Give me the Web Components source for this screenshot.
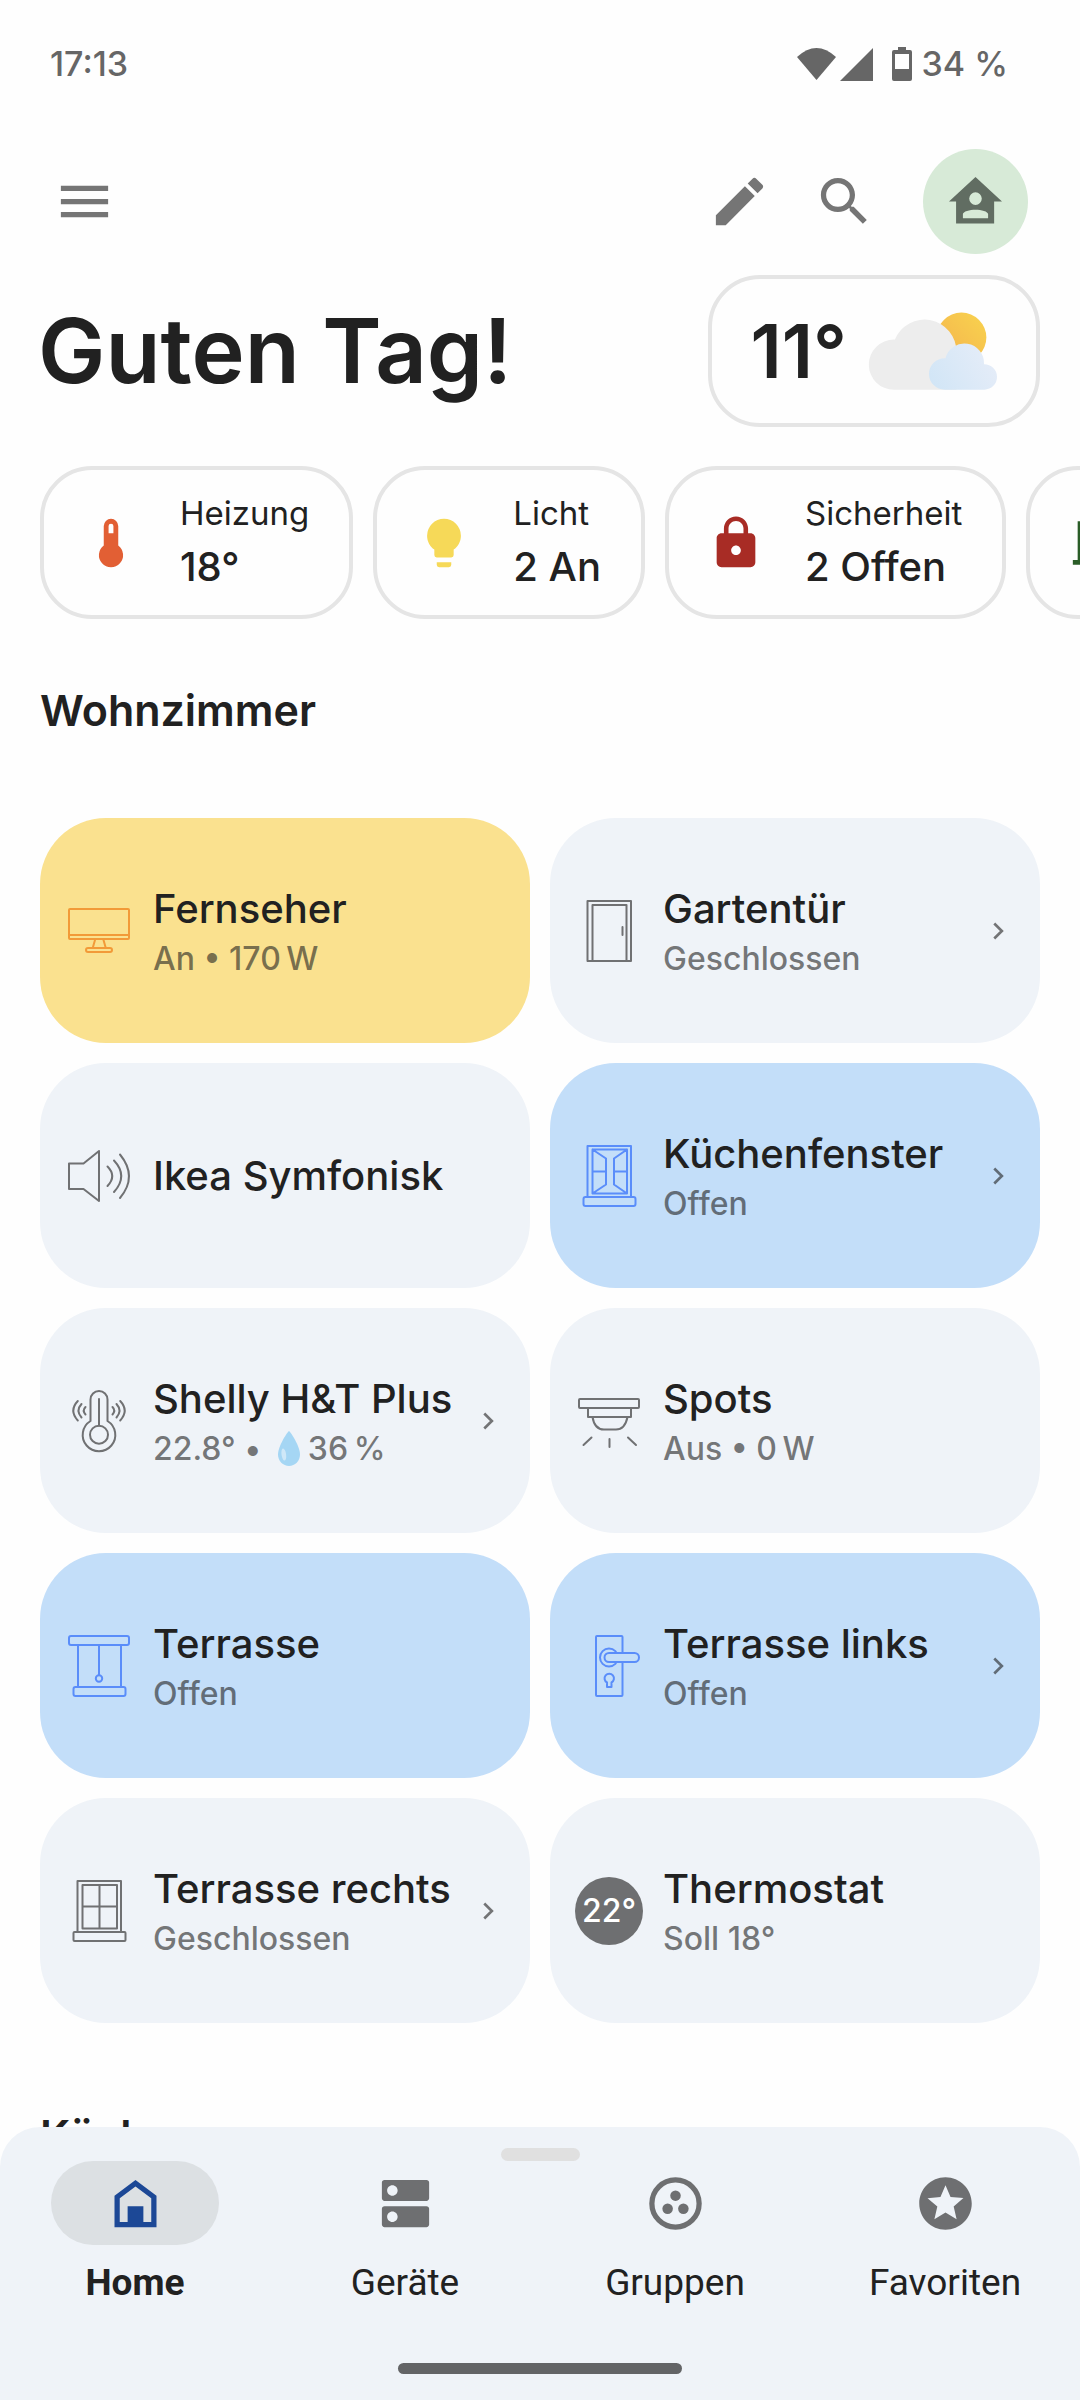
<!DOCTYPE html>
<html lang="de">
<head>
<meta charset="utf-8">
<meta name="viewport" content="width=device-width, initial-scale=1">
<title>Home</title>
<style>
  html, body { height: 100%; margin: 0; background: #fefefe; }
  body { font-family: Inter, "Open Sans", sans-serif; color: #212121; }
</style>
</head>
<body>
<home-app></home-app>

<script>
const ICONS = {
  menu: ['0 0 24 24', '<path d="M3 18h18v-2H3v2zm0-5h18v-2H3v2zm0-7v2h18V6H3z"/>'],
  edit: ['0 0 24 24', '<path d="M3 17.25V21h3.75L17.81 9.94l-3.75-3.75L3 17.25zM20.71 7.04c.39-.39.39-1.02 0-1.41l-2.34-2.34c-.39-.39-1.02-.39-1.41 0l-1.83 1.83 3.75 3.75 1.83-1.83z"/>'],
  search: ['0 0 24 24', '<path d="M15.5 14h-.79l-.28-.27C15.41 12.59 16 11.11 16 9.5 16 5.91 13.09 3 9.5 3S3 5.91 3 9.5 5.91 16 9.5 16c1.61 0 3.09-.59 4.23-1.57l.27.28v.79l5 4.99L20.49 19l-4.99-5zm-6 0C7.01 14 5 11.99 5 9.5S7.01 5 9.5 5 14 7.01 14 9.5 11.99 14 9.5 14z"/>'],
  account: ['0 0 24 24', '<path fill-rule="evenodd" d="M12 2.7 1.9 12h2.7v8.4h14.5V12h3zM12 8.5a2.4 2.4 0 1 1 0 4.8 2.4 2.4 0 0 1 0-4.8zM7.2 18.4v-1.5c0-1.2 2.6-1.8 4.8-1.8s4.8.6 4.8 1.8v1.5z"/>'],
  home: ['0 0 24 24', '<path fill-rule="evenodd" d="M12 3 4 9v12h16V9zM6 10l6-4.5 6 4.5v9h-3v-6H9v6H6z"/>'],
  devices: ['0 0 24 24', '<path fill-rule="evenodd" d="M20 13H4c-.55 0-1 .45-1 1v6c0 .55.45 1 1 1h16c.55 0 1-.45 1-1v-6c0-.55-.45-1-1-1zM7 19c-1.1 0-2-.9-2-2s.9-2 2-2 2 .9 2 2-.9 2-2 2zM20 3H4c-.55 0-1 .45-1 1v6c0 .55.45 1 1 1h16c.55 0 1-.45 1-1V4c0-.55-.45-1-1-1zM7 9c-1.1 0-2-.9-2-2s.9-2 2-2 2 .9 2 2-.9 2-2 2z"/>'],
  groups: ['0 0 24 24', '<circle cx="12" cy="12" r="9" fill="none" stroke="currentColor" stroke-width="2"/><circle cx="12" cy="9" r="2"/><circle cx="9" cy="14" r="2"/><circle cx="15" cy="14" r="2"/>'],
  star: ['0 0 24 24', '<path d="M11.99 2C6.47 2 2 6.48 2 12s4.47 10 9.99 10C17.52 22 22 17.52 22 12S17.52 2 11.99 2zm4.24 16L12 15.45 7.77 18l1.12-4.81-3.73-3.23 4.92-.42L12 5l1.92 4.53 4.92.42-3.73 3.23L16.23 18z"/>'],
  chevron: ['0 0 24 24', '<path d="M9.2 6.4 14.9 12l-5.7 5.6" fill="none" stroke="currentColor" stroke-width="2"/>'],
  heating: ['0 0 24 24', '<path fill-rule="evenodd" d="M15 13V5a3 3 0 0 0-6 0v8a5 5 0 1 0 6 0M12 4a1 1 0 0 1 1 1v3h-2V5a1 1 0 0 1 1-1z"/>'],
  bulb: ['0 0 24 24', '<path d="M12 2a7 7 0 0 0-7 7c0 2.38 1.19 4.47 3 5.74V17a1 1 0 0 0 1 1h6a1 1 0 0 0 1-1v-2.26c1.81-1.27 3-3.36 3-5.74a7 7 0 0 0-7-7M9 21a1 1 0 0 0 1 1h4a1 1 0 0 0 1-1v-1H9z"/>'],
  lock: ['0 0 24 24', '<path fill-rule="evenodd" d="M18 8h-1V6c0-2.76-2.24-5-5-5S7 3.24 7 6v2H6c-1.1 0-2 .9-2 2v10c0 1.1.9 2 2 2h12c1.1 0 2-.9 2-2V10c0-1.1-.9-2-2-2zm-6 9c-1.1 0-2-.9-2-2s.9-2 2-2 2 .9 2 2-.9 2-2 2zm3.1-9H8.9V6c0-1.71 1.39-3.1 3.1-3.1s3.1 1.39 3.1 3.1z"/>'],
  room: ['0 0 24 24', '<path fill-rule="evenodd" d="M13 6v15H2v-2h2V3h9v1h5v15h2v2h-4V6zm-4 5v2h2v-2z"/>'],
  wifi: ['0 0 39 32', '<path d="M0 9Q19.500-9 39 9L19.500 32z"/>'],
  signal: ['0 0 33 33', '<path d="M33 0v33H0z"/>'],
  battery: ['0 0 20 34', '<path fill-rule="evenodd" d="M6 0h8v3h4a2 2 0 0 1 2 2v27a2 2 0 0 1-2 2H2a2 2 0 0 1-2-2V5a2 2 0 0 1 2-2h4zM3 7v15h14V7z"/>'],
  weather: ['0 0 385 233', `<defs>
    <linearGradient id="sun" x1="0" y1="1" x2="1" y2="0"><stop offset=".2" stop-color="#f5b84e"/><stop offset=".9" stop-color="#f8d04e"/></linearGradient>
    <linearGradient id="mist" x1="0" y1="1" x2="1" y2=".6"><stop offset="0" stop-color="#d0e5f6"/><stop offset="1" stop-color="#e4ecf8"/></linearGradient></defs>
    <circle cx="278" cy="76" r="75" fill="url(#sun)"/>
    <path fill="#ededed" d="M75 233a75 75 0 0 1 0-151h3a96 96 0 0 1 185 37v114z"/>
    <path fill="url(#mist)" d="M228 233a47 47 0 0 1 0-95h2a59 59 0 0 1 116 18a38.500 38.500 0 0 1 1 77z"/>`],
  drop: ['0 0 22 35', '<path fill="#a5d6f4" d="M11 0c1 0 11 15 11 23.500C22 30 17 35 11 35S0 30 0 23.500C0 15 10 0 11 0z"/><ellipse cx="5.800" cy="23.500" rx="2.300" ry="6" fill="#cfe8f8" transform="rotate(-8 5.800 23.500)"/>'],
  tv: ['0 0 62 62', '<rect x="1" y="9" width="60" height="30" rx="1"/><path d="M1 35h60M27 40l-2 7M35.500 40l2 7"/><rect x="18" y="48" width="26" height="4" rx="2"/>'],
  speaker: ['0 0 62 62', '<path d="M1 18.500h14.500L31 6v50L15.500 44H1zM39.500 21.500q9.500 9.500 0 19.500M46 15.500q14.500 15.500 0 31.500M52 9.500q18 22 0 43.500"/>'],
  door: ['0 0 62 62', '<path d="M9.500 1h43.500v60H9.500zM14.500 61V5h34v56M44.500 27v8"/>'],
  windowOpen: ['0 0 62 62', '<path d="M9.500 52V1H53v51M14.500 4.500H49v44H14.500zM14.500 4.500l13.500 9v26l-13.500 9M49 4.500l-13 9v26l13 9M14.500 26.500H28M36 26.500h13"/><rect x="5.500" y="52" width="52" height="9" rx="2"/>'],
  windowClosed: ['0 0 62 62', '<path d="M9.500 52V1H53v51M14.500 5H49v43.500H14.500zM31.500 5v43.500M14.500 26.500H49"/><rect x="5.500" y="52" width="52" height="9" rx="1"/>'],
  thermo: ['0 0 62 62', '<path d="M22.500 31V9.500a8.500 8.500 0 0 1 17 0V31a16.300 16.300 0 1 1-17 0M31 9v26.500M17.500 17q-3.500 3.500 0 7.500M13.500 14q-6 6.500 0 13.500M9.800 11q-9 9.500 0 19.500M44.500 17q3.500 3.500 0 7.500M48.500 14q6 6.500 0 13.500M52.200 11q9 9.500 0 19.500"/><circle cx="31" cy="44.700" r="9"/>'],
  blind: ['0 0 62 62', '<rect x="1" y="1" width="60" height="9" rx="2"/><path d="M10 10v42M53 10v42M31 10v30"/><circle cx="31" cy="43.500" r="3.200"/><rect x="5.500" y="52" width="52" height="9" rx="2"/>'],
  spots: ['0 0 62 62', '<rect x="1" y="9" width="60" height="9" rx="1"/><path d="M10 18v9h43v-9M14.500 27q2 12.500 11.500 12.500h12Q47 39.500 49.500 27M13.500 47.500l-8 7.500M31.500 49v8M50 47.500l8 7.500"/>'],
  handle: ['0 0 62 62', '<rect x="18" y="1" width="26.500" height="60" rx="1"/><circle cx="31" cy="22.500" r="9"/><rect x="26.500" y="18" width="34.500" height="9" rx="4.500" fill="var(--card)"/><path d="M29 52v-4.500a4.700 4.700 0 1 1 4.500 0V52z"/>']
};

const define = (name, css, html) => customElements.define(name, class extends HTMLElement {
  connectedCallback() {
    if (this.shadowRoot) return;
    const root = this.attachShadow({ mode: 'open' });
    const attr = key => this.getAttribute(key) || '';
    root.innerHTML = `<style>*{box-sizing:border-box}${css}</style>${typeof html === 'function' ? html(attr) : html}`;
  }
});

define('ui-icon', `
  :host { display: block; flex: none; width: var(--w, 63px); height: var(--h, var(--w, 63px)); }
  svg { display: block; width: 100%; height: 100%; fill: currentColor; overflow: visible; }
  svg.line { fill: none; stroke: currentColor; stroke-width: 2; stroke-linecap: round; stroke-linejoin: round; }
`, a => {
  const [box, body] = ICONS[a('name')];
  return `<svg viewBox="${box}" class="${box === '0 0 62 62' ? 'line' : ''}" aria-hidden="true">${body}</svg>`;
});

define('status-bar', `
  :host { display: flex; justify-content: space-between; align-items: center; height: 128px; padding: 0 72px 0 50px;
          color: #666; font-size: 34px; font-weight: 500; line-height: 40px; }
  .right { display: flex; align-items: center; }
  .wifi { --w: 39px; --h: 32px; margin-right: 4px; }
  .signal { --w: 33px; margin-right: 19px; }
  .battery { --w: 20px; --h: 34px; margin-right: 10px; }
`, `<span>17:13</span>
  <span class="right"><ui-icon class="wifi" name="wifi"></ui-icon><ui-icon class="signal" name="signal"></ui-icon><ui-icon class="battery" name="battery"></ui-icon>34 %</span>`);

define('icon-button', `
  :host { display: block; }
  button { display: grid; place-items: center; width: 105px; height: 105px; padding: 0; border: 0; border-radius: 50%;
           background: var(--fill, transparent); color: var(--ink, #757575); }
`, a => `<button type="button" aria-label="${a('label')}"><ui-icon name="${a('icon')}"></ui-icon></button>`);

define('app-bar', `
  :host { display: flex; align-items: center; padding: 21px 52px 21px 32px; }
  .gap { flex: 1; }
  .account { --fill: #d7ead7; --ink: #616d62; margin-left: 26px; }
`, `<icon-button icon="menu" label="Menü"></icon-button><span class="gap"></span>
  <icon-button icon="edit" label="Bearbeiten"></icon-button>
  <icon-button icon="search" label="Suchen"></icon-button>
  <icon-button class="account" icon="account" label="Konto"></icon-button>`);

define('greeting-row', `
  :host { display: flex; align-items: center; justify-content: space-between; padding: 0 40px 0 38px; }
  h1 { margin: 0; font-size: 90px; line-height: 112px; font-weight: 600; }
  .weather { display: flex; align-items: center; gap: 22px; height: 152px; padding: 0 39px; border: 4px solid #e5e5e5;
             border-radius: 52px; font-size: 74px; line-height: 80px; font-weight: 600; }
  ui-icon { --w: 128px; --h: 78px; }
`, `<h1>Guten Tag!</h1><div class="weather"><span>11°</span><ui-icon name="weather"></ui-icon></div>`);

define('summary-chip', `
  :host { display: block; flex: none; }
  button { display: flex; align-items: center; gap: 40px; height: 153px; padding: 0 40px 0 38px; border: 4px solid #e5e5e5;
           border-radius: 52px; background: none; font: inherit; color: inherit; text-align: left; }
  ui-icon { --w: 58px; color: var(--ink); }
  span { display: grid; }
  small { font-size: 33px; line-height: 48px; font-weight: 400; }
  b { font-size: 40px; line-height: 60px; font-weight: 500; }
`, a => `<button type="button" aria-label="${a('label') || 'Türen'}"><ui-icon name="${a('icon')}"></ui-icon>${
  a('label') ? `<span><small>${a('label')}</small><b>${a('value')}</b></span>` : ''}</button>`);

define('chip-row', `
  :host { display: flex; gap: 20px; padding: 39px 40px 0; overflow: hidden; }
`, '<slot></slot>');

define('room-section', `
  :host { display: block; padding: 0 40px; }
  h2 { margin: 0 0 80px; font-size: 43px; line-height: 56px; font-weight: 600; }
  .grid { display: grid; grid-template-columns: repeat(2, minmax(0, 1fr)); gap: 20px; }
`, a => `<h2>${a('label')}</h2><div class="grid"><slot></slot></div>`);

define('device-card', `
  :host { --card: #eff3f8; --ink: #707173; display: block; }
  :host([tone="on"]) { --card: #fae18f; --ink: #f29a38; }
  :host([tone="open"]) { --card: #c3def9; --ink: #5a8dfa; }
  button { display: flex; align-items: center; gap: 20px; width: 100%; height: 225px; padding: 0 26px 0 25px; border: 0;
           border-radius: 66px; background: var(--card); font: inherit; color: inherit; text-align: left; }
  .lead { display: grid; place-items: center; flex: none; width: 68px; height: 68px; color: var(--ink); --w: 62px; }
  .badge { border-radius: 50%; background: #6e6f71; color: #fff; font-size: 32px; font-weight: 500; }
  .text { display: grid; flex: 1; min-width: 0; white-space: nowrap; }
  strong { font-size: 40px; line-height: 56px; font-weight: 500; }
  .state { display: flex; align-items: center; height: 44px; font-size: 32px; line-height: 44px; font-weight: 500;
           color: rgb(33 33 33 / .6); white-space: pre; }
  .chevron { --w: 32px; color: #212121; opacity: .6; }
  ::slotted(ui-icon) { --w: 22px; --h: 35px; margin: 0 8px; }
`, a => `<button type="button">
  ${a('badge') ? `<span class="lead badge">${a('badge')}</span>` : `<span class="lead"><ui-icon name="${a('icon')}"></ui-icon></span>`}
  <span class="text"><strong>${a('label')}</strong>${a('plain') ? '' : '<span class="state"><slot></slot></span>'}</span>
  ${a('more') ? '<ui-icon class="chevron" name="chevron"></ui-icon>' : ''}</button>`);

define('nav-item', `
  :host { display: block; flex: 1; }
  a { display: flex; flex-direction: column; align-items: center; gap: 15px; color: #212121; text-decoration: none;
      font-family: Roboto, sans-serif; font-size: 37px; line-height: 46px; }
  .pill { display: grid; place-items: center; width: 168px; height: 84px; border-radius: 42px; color: #6e6f71; }
  :host([active]) .pill { background: #dce0e3; color: #1c4896; }
  :host([active]) a { font-weight: 700; }
`, a => `<a href="#${a('icon')}"><span class="pill"><ui-icon name="${a('icon')}"></ui-icon></span><span>${a('label')}</span></a>`);

define('nav-bar', `
  :host { display: flex; flex-direction: column; align-items: center; flex: none; padding: 21px 0 26px;
          background: #eff3f8; border-radius: 40px 40px 0 0; }
  .grip { width: 79px; height: 13px; border-radius: 7px; background: #e0e0e0; }
  nav { display: flex; width: 100%; margin-bottom: 57px; }
  .gesture { width: 284px; height: 11px; border-radius: 6px; background: #636466; }
`, `<span class="grip"></span>
  <nav><nav-item active icon="home" label="Home"></nav-item><nav-item icon="devices" label="Geräte"></nav-item>
  <nav-item icon="groups" label="Gruppen"></nav-item><nav-item icon="star" label="Favoriten"></nav-item></nav>
  <span class="gesture"></span>`);

define('home-app', `
  :host { display: flex; flex-direction: column; height: 100vh; }
  main { flex: 1; min-height: 0; overflow: hidden auto; scrollbar-width: none; }
  .first { margin-top: 63px; }
  .next { margin-top: 84px; }
`, `<main>
  <status-bar></status-bar>
  <app-bar></app-bar>
  <greeting-row></greeting-row>
  <chip-row>
    <summary-chip icon="heating" label="Heizung" value="18°" style="--ink:#e25f34"></summary-chip>
    <summary-chip icon="bulb" label="Licht" value="2 An" style="--ink:#f6d958"></summary-chip>
    <summary-chip icon="lock" label="Sicherheit" value="2 Offen" style="--ink:#a82c25"></summary-chip>
    <summary-chip icon="room" style="--ink:#2a5d27"></summary-chip>
  </chip-row>
  <room-section class="first" label="Wohnzimmer">
    <device-card tone="on" icon="tv" label="Fernseher">An • 170&#8201;W</device-card>
    <device-card icon="door" label="Gartentür" more="1">Geschlossen</device-card>
    <device-card icon="speaker" label="Ikea Symfonisk" plain="1"></device-card>
    <device-card tone="open" icon="windowOpen" label="Küchenfenster" more="1">Offen</device-card>
    <device-card icon="thermo" label="Shelly H&amp;T Plus" more="1">22.8° • <ui-icon name="drop"></ui-icon>36&#8201;%</device-card>
    <device-card icon="spots" label="Spots">Aus • 0&#8201;W</device-card>
    <device-card tone="open" icon="blind" label="Terrasse">Offen</device-card>
    <device-card tone="open" icon="handle" label="Terrasse links" more="1">Offen</device-card>
    <device-card icon="windowClosed" label="Terrasse rechts" more="1">Geschlossen</device-card>
    <device-card badge="22°" label="Thermostat">Soll 18°</device-card>
  </room-section>
  <room-section class="next" label="Küche"></room-section>
  </main>
  <nav-bar></nav-bar>`);
</script>
</body>
</html>
